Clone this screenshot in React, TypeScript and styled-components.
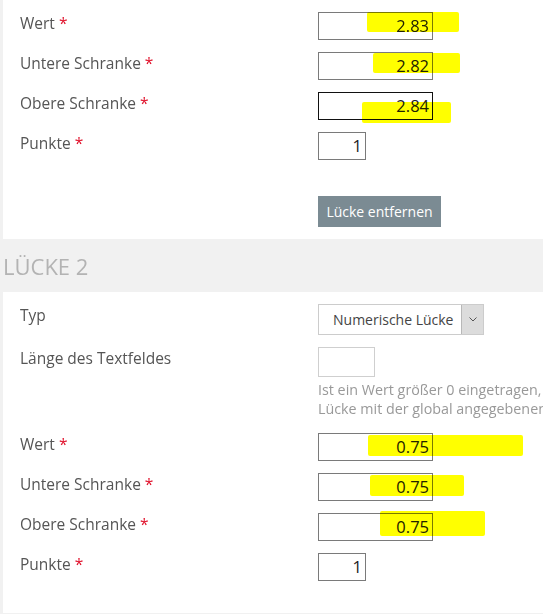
import React from "react";
import styled, { createGlobalStyle } from "styled-components";

const Global = createGlobalStyle`
  html, body { margin: 0; padding: 0; }
  body {
    background: #f1f1f1;
    font-family: "Open Sans", "Liberation Sans", sans-serif;
    color: #555;
    width: 543px;
    height: 614px;
    overflow: hidden;
  }
`;

const Page = styled.div`
  display: flex;
  flex-direction: column;
  width: 543px;
  height: 614px;
  overflow: hidden;
`;

const Panel = styled.div<{ $top: number; $bottom: number }>`
  background: #fff;
  margin-left: 3px;
  padding: ${(p) => p.$top}px 0 ${(p) => p.$bottom}px 17px;
  display: flex;
  flex-direction: column;
  flex: none;
`;

const SectionHeader = styled.div`
  flex: none;
  height: 53px;
  display: flex;
  align-items: center;
  padding-left: 3px;
  font-size: 22px;
  color: #b3b3b3;
  background: #f1f1f1;
`;

const Row = styled.div<{ $gap: number }>`
  display: flex;
  align-items: flex-start;
  margin-bottom: ${(p) => p.$gap}px;
  &:last-child { margin-bottom: 0; }
`;

const Label = styled.div`
  width: 298px;
  flex: none;
  font-size: 15.5px;
  line-height: 20px;
  padding-top: 1px;
  color: #555;
`;

const Star = styled.span`
  color: #e0102a;
  margin-left: 4px;
`;

const Control = styled.div`
  flex: 1;
  min-width: 0;
  position: relative;
`;

const NumInput = styled.div<{ $w: number; $dark?: boolean }>`
  box-sizing: border-box;
  width: ${(p) => p.$w}px;
  height: 28px;
  border: 1px solid ${(p) => (p.$dark ? "#111" : "#7a7a7a")};
  background: #fff;
  font-size: 16.5px;
  line-height: 26px;
  text-align: right;
  padding-right: 3px;
  color: #222;
`;

const EmptyBox = styled.div`
  box-sizing: border-box;
  width: 57px;
  height: 30px;
  border: 1px solid #cfcfcf;
  background: #fff;
`;

const Select = styled.div`
  box-sizing: border-box;
  width: 166px;
  height: 31px;
  border: 1px solid #cccccc;
  background: #fff;
  display: flex;
  align-items: stretch;
`;

const SelectText = styled.div`
  flex: 1;
  font-size: 14px;
  line-height: 29px;
  padding-left: 14px;
  color: #444;
  white-space: nowrap;
`;

const SelectArrow = styled.div`
  width: 21px;
  background: #dcdcdc;
  border-left: 1px solid #b8b8b8;
  display: flex;
  align-items: center;
  justify-content: center;
`;

const Help = styled.div`
  font-size: 14.3px;
  line-height: 19px;
  color: #999;
  white-space: nowrap;
  overflow: hidden;
  margin-top: 3px;
`;

const Button = styled.div`
  display: inline-flex;
  align-items: center;
  justify-content: center;
  width: 123px;
  height: 31px;
  background: #7b8b93;
  color: #fff;
  font-size: 14px;
`;

const Marker = styled.div`
  position: absolute;
  background: #ffff00;
  mix-blend-mode: multiply;
  pointer-events: none;
  border-radius: 2px;
`;

type Mark = { l: number; t: number; w: number; h: number };

const Field = ({
  label,
  value,
  w = 115,
  dark,
  mark,
  gap = 12,
}: {
  label: string;
  value: string;
  w?: number;
  dark?: boolean;
  mark?: Mark;
  gap?: number;
}) => (
  <Row $gap={gap}>
    <Label>
      {label}
      <Star>*</Star>
    </Label>
    <Control>
      <NumInput $w={w} $dark={dark}>
        {value}
      </NumInput>
      {mark && (
        <Marker
          style={{ left: mark.l, top: mark.t, width: mark.w, height: mark.h }}
        />
      )}
    </Control>
  </Row>
);

export default function App() {
  return (
    <Page>
      <Global />
      <Panel $top={12} $bottom={12}>
        <Field label="Wert" value="2.83" mark={{ l: 49, t: 0, w: 92, h: 20 }} />
        <Field label="Untere Schranke" value="2.82" mark={{ l: 55, t: 1, w: 87, h: 20 }} />
        <Field label="Obere Schranke" value="2.84" dark mark={{ l: 44, t: 10, w: 89, h: 21 }} />
        <Field label="Punkte" value="1" w={48} gap={36} />
        <Row $gap={0}>
          <Label />
          <Control>
            <Button>Lücke entfernen</Button>
          </Control>
        </Row>
      </Panel>
      <SectionHeader>LÜCKE 2</SectionHeader>
      <Panel $top={12} $bottom={32}>
        <Row $gap={12}>
          <Label>Typ</Label>
          <Control>
            <Select>
              <SelectText>Numerische Lücke</SelectText>
              <SelectArrow>
                <svg width="8" height="5" viewBox="0 0 8 5">
                  <path d="M0.5 0.5 L4 4 L7.5 0.5" fill="none" stroke="#555" strokeWidth="1" />
                </svg>
              </SelectArrow>
            </Select>
          </Control>
        </Row>
        <Row $gap={15}>
          <Label>Länge des Textfeldes</Label>
          <Control>
            <EmptyBox />
            <Help>
              Ist ein Wert größer 0 eingetragen,
              <br />
              Lücke mit der global angegebenen
            </Help>
          </Control>
        </Row>
        <Field label="Wert" value="0.75" mark={{ l: 50, t: 2, w: 155, h: 21 }} />
        <Field label="Untere Schranke" value="0.75" mark={{ l: 52, t: 2, w: 94, h: 21 }} />
        <Field label="Obere Schranke" value="0.75" mark={{ l: 62, t: -2, w: 105, h: 25 }} />
        <Field label="Punkte" value="1" w={48} />
      </Panel>
    </Page>
  );
}
